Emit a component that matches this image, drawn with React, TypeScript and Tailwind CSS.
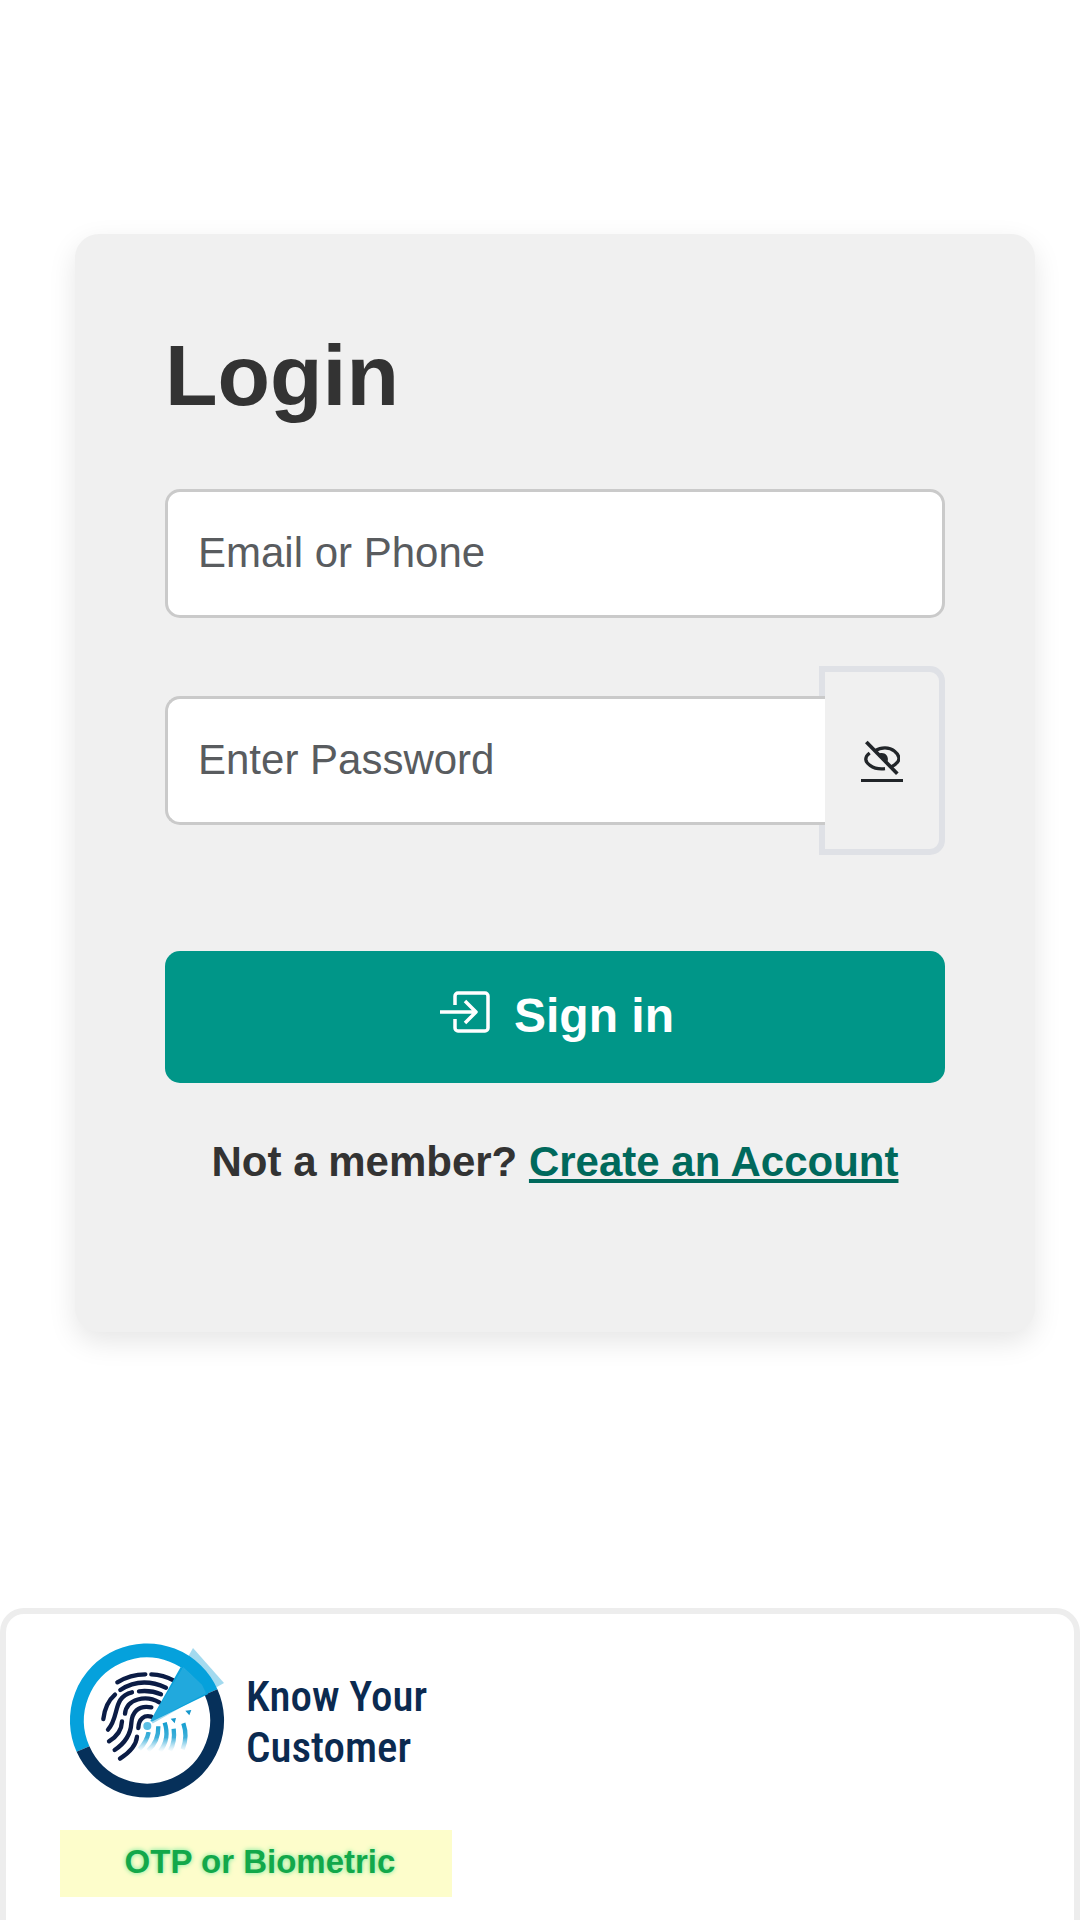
const fieldClass =
  'w-full min-w-0 h-[129px] border-[3px] border-[#cacaca] bg-white pl-[30px] pb-0.5 text-[42px] text-[#212529] placeholder:text-[#595c5f] outline-none';

const EyeOffIcon = () => (
  <svg viewBox="24 11 108 108" className="h-9 w-9" fill="none" stroke="currentColor" strokeWidth="10">
    <path d="M58 46C74 35 100 34 115 47C132 61 131 73 124 81C119 88 114 91 105 95" />
    <path d="M41 53C24 66 27 80 42 90C53 98 70 102 87 100" />
    <path d="M64 58C78 46 100 56 95 78Z" fill="currentColor" stroke="none" />
    <path d="M31 20L124 115" strokeWidth="11" />
  </svg>
);

const SignInIcon = () => (
  <svg
    viewBox="0 0 50 42"
    className="mb-[9px] h-[42px] w-[50px]"
    fill="none"
    stroke="currentColor"
    strokeWidth="3.5"
    strokeLinejoin="round"
  >
    <path d="M15 14V5a3 3 0 0 1 3-3h27a3 3 0 0 1 3 3v32a3 3 0 0 1-3 3H18a3 3 0 0 1-3-3v-9" />
    <path d="M0 21h35M25 10l11 11l-11 11" />
  </svg>
);

const KycLogo = () => (
  <svg viewBox="0 0 180 180" className="h-[180px] w-[180px] shrink-0" fill="none">
    <defs>
      <linearGradient id="scan" x1="0" y1="165" x2="0" y2="252" gradientUnits="userSpaceOnUse">
        <stop offset="0" stopColor="#159fd0" />
        <stop offset="0.5" stopColor="#3fb0da" />
        <stop offset="1" stopColor="#8fd3ee" stopOpacity="0" />
      </linearGradient>
    </defs>
    <path d="M133 18L164 53L90 95Z" fill="#a3daef" />
    <path d="M23 119A70 70 0 0 1 151 62" stroke="#05a1dc" strokeWidth="14" />
    <path d="M151 62A70 70 0 0 1 23 119" stroke="#06305a" strokeWidth="14" />
    <g transform="translate(36 38) scale(0.3333)">
      <g stroke="#0b1c45" strokeWidth="13" strokeLinecap="round">
        <path d="M64 43Q103 19 148 19M166 19Q202 20 234 38" />
        <path d="M73 66Q135 25 210 59" />
        <path d="M57 80Q28 105 22 153" />
        <path d="M108 73C48 88 72 145 36 185" />
        <path d="M129 70Q165 66 195 79" />
        <path d="M87 137C92 92 150 80 190 103" />
        <path d="M78 160C77 188 62 206 39 220" />
        <path d="M166 118C125 110 108 135 106 165C104 205 80 230 56 246" />
        <path d="M166 146C145 140 128 152 127 180" />
        <path d="M123 206C121 232 97 256 72 272" />
      </g>
      <g stroke="url(#scan)" strokeWidth="13">
        <path d="M158 192Q152 222 130 244M187 175Q188 222 156 248" />
        <path d="M206 164Q222 212 192 250M233 182Q238 222 222 248" />
        <path d="M262 166Q276 206 260 244" />
      </g>
      <path d="M224 152L240 150L236 166ZM268 128L286 126L280 142Z" fill="#1597cc" />
      <path d="M160 164L254 -3L275 10L318 50L337 78Z" fill="#0ba1da" />
      <path d="M160 164L262 -3L318 50L330 76Z" fill="#7fcbe9" opacity="0.2" />
      <circle cx="154" cy="174" r="15" fill="#5cbfe4" stroke="#fff" strokeWidth="6" />
    </g>
  </svg>
);

const LoginForm = () => (
  <form className="rounded-[24px] bg-[#f0f0f0] px-[90px] pt-[91px] pb-[146px] shadow-[0_10px_28px_rgba(0,0,0,0.1)]">
    <h1 className="text-[86px] leading-[100px] font-bold text-[#333]">Login</h1>
    <input
      type="text"
      aria-label="Email or Phone"
      placeholder="Email or Phone"
      className={`${fieldClass} mt-16 block rounded-[15px]`}
    />
    <div className="mt-12 flex items-center">
      <input
        type="password"
        aria-label="Enter Password"
        placeholder="Enter Password"
        className={`${fieldClass} z-10 flex-1 rounded-l-[15px] border-r-0`}
      />
      <button
        type="button"
        aria-label="Show password"
        className="-ml-1.5 flex h-[189px] w-[126px] shrink-0 items-center justify-center rounded-r-[15px] border-[6px] border-[#dfe1e6] text-[#212529]"
      >
        <span className="border-b-[3px] border-current px-[3px] pb-1">
          <EyeOffIcon />
        </span>
      </button>
    </div>
    <button
      type="submit"
      className="mt-24 flex h-[132px] w-full items-center justify-center gap-6 rounded-[15px] bg-[#009688] pb-0.5 pl-1 text-[48px] font-bold text-white"
    >
      <SignInIcon />
      Sign in
    </button>
    <p className="mt-[55px] text-center text-[42px] leading-[48px] font-bold text-[#333]">
      Not a member?{' '}
      <a href="#" className="text-[#00695c] underline">
        Create an Account
      </a>
    </p>
  </form>
);

const App = () => {
  return (
    <div className="h-screen overflow-hidden bg-white font-['Liberation_Sans',Arial,sans-serif]">
      <main className="pt-[234px] pr-[45px] pl-[75px]">
        <LoginForm />
      </main>
      <section className="mt-[276px] rounded-t-[24px] border-[6px] border-b-0 border-[#ededed] pt-4 pb-10 pl-[54px]">
        <div className="flex items-center">
          <KycLogo />
          <p className="ml-1.5 pt-1 font-['Roboto_Condensed',Roboto,sans-serif] text-[43px] leading-[51px] font-medium text-[#0b2a50]">
            Know Your
            <br />
            Customer
          </p>
        </div>
        <p className="mt-5 flex h-[67px] w-[392px] items-center justify-center bg-[#fdfdcb] pb-1 pl-2 text-[33px] font-bold text-[#12a84a] [text-shadow:0_0_5px_#6ee79a]">
          OTP or Biometric
        </p>
      </section>
    </div>
  );
};

export default App;
